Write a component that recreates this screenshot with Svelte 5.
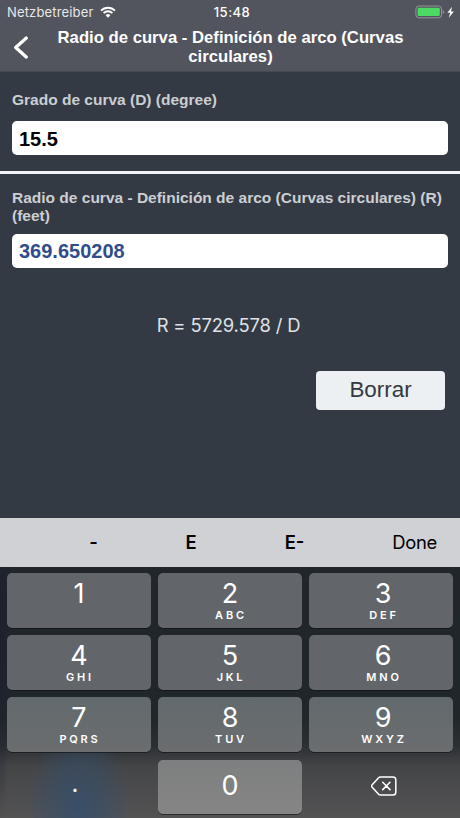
<script lang="ts">
  let degree = '15.5';
  let radius = '369.650208';

  const keys = [
    { digit: '1', letters: '' },
    { digit: '2', letters: 'ABC' },
    { digit: '3', letters: 'DEF' },
    { digit: '4', letters: 'GHI' },
    { digit: '5', letters: 'JKL' },
    { digit: '6', letters: 'MNO' },
    { digit: '7', letters: 'PQRS' },
    { digit: '8', letters: 'TUV' },
    { digit: '9', letters: 'WXYZ' },
  ];

  function press(key: string) {
    degree += key;
  }

  function backspace() {
    degree = degree.slice(0, -1);
  }

  function clear() {
    degree = '';
    radius = '';
  }
</script>

<div class="screen">
  <header>
    <div class="status">
      <div class="carrier">
        <span class="carrier-name">Netzbetreiber</span>
        <svg width="16" height="12" viewBox="0 0 16 12">
          <path d="M1.1 4.6a9.8 9.8 0 0 1 13.8 0" fill="none" stroke="#fff" stroke-width="2" />
          <path d="M3.6 7.1a6.2 6.2 0 0 1 8.8 0" fill="none" stroke="#fff" stroke-width="1.9" />
          <path d="M5.6 9.3a3.4 3.4 0 0 1 4.8 0L8 11.7z" fill="#fff" />
        </svg>
      </div>
      <span class="time">15:48</span>
      <div class="power">
        <svg width="40" height="14" viewBox="0 0 40 14">
          <rect x="0.9" y="1" width="25.6" height="11.8" rx="3" fill="none" stroke="#92979b" />
          <rect x="2.6" y="2.7" width="22.2" height="8.4" rx="1.4" fill="#4cd964" />
          <path d="M27.8 5v4q1.4-.5 1.4-2t-1.4-2z" fill="#92979b" />
          <path d="M37 1.7l-4.6 6h2.8l-1.4 5 5.1-6.3H36z" fill="#fff" />
        </svg>
      </div>
    </div>
    <div class="nav">
      <button class="back" aria-label="Back">
        <svg width="16" height="26" viewBox="0 0 16 26">
          <path d="M13.3 3L2.7 12.5l10.6 9.500" fill="none" stroke="#fff" stroke-width="3.3" stroke-linecap="round" stroke-linejoin="round" />
        </svg>
      </button>
      <h1>Radio de curva - Definición de arco (Curvas<br />circulares)</h1>
    </div>
  </header>

  <main>
    <section class="source">
      <label for="degree">Grado de curva (D) (degree)</label>
      <input id="degree" type="text" bind:value={degree} />
    </section>

    <section class="result">
      <label for="radius">Radio de curva - Definición de arco (Curvas circulares) (R)<br />(feet)</label>
      <input id="radius" type="text" readonly value={radius} />
    </section>

    <p class="formula">R = 5729.578 / D</p>
    <button class="clear" on:click={clear}>Borrar</button>
  </main>

  <div class="toolbar">
    <button class="minus" on:click={() => press('-')}>-</button>
    <button on:click={() => press('E')}>E</button>
    <button on:click={() => press('E-')}>E-</button>
    <button class="done">Done</button>
  </div>

  <div class="keypad">
    {#each keys as key}
      <button class="key" on:click={() => press(key.digit)}>
        <span class="digit">{key.digit}</span>
        <span class="letters">{key.letters}</span>
      </button>
    {/each}
    <button class="key plain point" on:click={() => press('.')}>.</button>
    <button class="key zero" on:click={() => press('0')}>
      <span class="digit">0</span>
    </button>
    <button class="key plain" aria-label="Delete" on:click={backspace}>
      <svg width="26" height="20" viewBox="0 0 26 20">
        <path d="M9.3 1H22a2.8 2.8 0 0 1 2.8 2.8v12.4A2.8 2.8 0 0 1 22 19H9.3q-1 0-1.7-.8L1 11.1q-.9-1.1 0-2.2l6.6-7.1Q8.3 1 9.3 1z" fill="none" stroke="#fff" stroke-width="1.5" />
        <path d="M11.7 6.3l7.3 7.3M19 6.3l-7.3 7.3" fill="none" stroke="#fff" stroke-width="1.5" stroke-linecap="round" />
      </svg>
    </button>
  </div>
</div>

<style>
  :global(body) {
    margin: 0;
    background: #343a44;
  }

  .screen {
    display: flex;
    flex-direction: column;
    width: 460px;
    height: 818px;
    overflow: hidden;
    background: #343a44;
    font-family: 'Liberation Sans', Arial, sans-serif;
  }

  button {
    margin: 0;
    padding: 0;
    border: 0;
    background: none;
    font-family: inherit;
    cursor: pointer;
  }

  svg {
    display: block;
  }

  header {
    flex: none;
    box-sizing: border-box;
    height: 72px;
    background: #52555d;
    border-bottom: 1px solid #454951;
    color: #fff;
  }

  .status {
    display: grid;
    grid-template-columns: 1fr auto 1fr;
    align-items: center;
    height: 24px;
    padding: 0 5px 0 7px;
    font-family: Inter, sans-serif;
    font-size: 13px;
  }

  .carrier {
    display: flex;
    align-items: center;
    gap: 6px;
  }

  .carrier-name {
    color: #e6e8ea;
    letter-spacing: 0.16px;
  }

  .time {
    padding-left: 2px;
    font-weight: 500;
    letter-spacing: 0.5px;
  }

  .power {
    display: flex;
    justify-content: flex-end;
  }

  .nav {
    display: grid;
    grid-template-columns: 44px 1fr 44px;
    height: 47px;
  }

  .back {
    display: flex;
    align-items: center;
    padding-left: 13px;
  }

  h1 {
    margin: 4px 0 0;
    padding-left: 1px;
    font-size: 16.7px;
    line-height: 19px;
    font-weight: 700;
    text-align: center;
    white-space: nowrap;
  }

  main {
    display: flex;
    flex-direction: column;
    height: 446px;
  }

  section {
    display: flex;
    flex-direction: column;
    box-sizing: border-box;
    padding: 0 12px;
  }

  .source {
    height: 102px;
    padding-top: 19px;
    border-bottom: 3px solid #f2f3f4;
  }

  .result {
    height: 94px;
    padding-top: 15px;
  }

  label {
    color: #cbced2;
    font-size: 15.5px;
    line-height: 18px;
    font-weight: 700;
    white-space: nowrap;
  }

  input {
    box-sizing: border-box;
    width: 100%;
    height: 34px;
    margin: 12px 0 0;
    padding: 0 7px;
    border: 0;
    border-radius: 5px;
    outline: none;
    background: #fff;
    color: #000;
    font-family: 'Liberation Sans', Arial, sans-serif;
    font-size: 20px;
    font-weight: 700;
  }

  .source input {
    padding-top: 2px;
  }

  .result input {
    margin-top: 9px;
    color: #304d8b;
  }

  .formula {
    margin: 45px 0 0;
    padding-right: 3px;
    color: #dfe2e5;
    font-family: Inter, sans-serif;
    font-size: 18.4px;
    line-height: 24px;
    letter-spacing: -0.15px;
    text-align: center;
  }

  .clear {
    align-self: flex-end;
    width: 129px;
    height: 39px;
    margin: 34px 15px 0 0;
    padding-bottom: 2px;
    border-radius: 4px;
    background: #ecf0f2;
    color: #343840;
    font-size: 22.4px;
  }

  .toolbar {
    display: grid;
    grid-template-columns: 48px 91px 104px 103px 1fr;
    flex: none;
    height: 49px;
    background: #d0d1d5;
  }

  .toolbar button {
    padding-bottom: 1px;
    color: #000;
    font-family: Inter, sans-serif;
    font-size: 18.4px;
    font-weight: 600;
  }

  .toolbar .minus {
    grid-column: 2;
  }

  .toolbar .done {
    padding-right: 23px;
    font-weight: 400;
    letter-spacing: -0.3px;
    text-align: right;
  }

  /* dark blurred backdrop, lighter towards the bottom with a blue spot under the point key */
  .keypad {
    display: grid;
    grid-template-columns: repeat(3, 144px);
    grid-template-rows: repeat(4, 54.5px);
    gap: 7.7px 7px;
    flex: 1;
    align-content: start;
    padding: 6px 7px 0;
    background:
      radial-gradient(ellipse 12px 190px at 0 70px, rgba(27, 28, 46, 0.6), rgba(27, 28, 46, 0)),
      radial-gradient(ellipse 52px 85px at 78px 240px, rgba(53, 78, 107, 0.85), rgba(53, 78, 107, 0.55) 45%, rgba(53, 78, 107, 0)),
      linear-gradient(to bottom, #20262b 0, #20272b 150px, #2b2f33 178px, #444547 200px, #535354 251px);
  }

  .key {
    display: flex;
    flex-direction: column;
    align-items: center;
    box-sizing: border-box;
    padding: 4px 0 0;
    border-radius: 5px;
    background: #62666a;
    box-shadow: 0 1px 0 rgba(10, 12, 14, 0.55);
    color: #fff;
    font-family: Inter, sans-serif;
  }

  .key:nth-child(3n) {
    padding-left: 4px;
  }

  .key:nth-child(n + 7) {
    background: linear-gradient(#626a6d, #6b6d6f);
  }

  .digit {
    height: 32px;
    font-size: 27px;
    line-height: 33px;
    font-weight: 400;
  }

  .letters {
    margin-left: 2px;
    font-size: 11px;
    line-height: 13px;
    font-weight: 600;
    letter-spacing: 2.8px;
  }

  .key.zero {
    justify-content: center;
    padding: 0 0 3px;
    background: linear-gradient(#7e7f80, #858585);
  }

  .key.plain {
    justify-content: center;
    padding: 0 0 1px 6px;
    background: none;
    box-shadow: none;
  }

  .key.point {
    padding: 0 8px 6px 0;
    font-size: 24px;
  }
</style>
